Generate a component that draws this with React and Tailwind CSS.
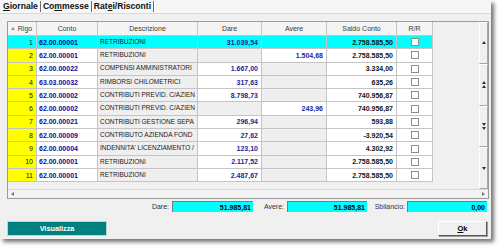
import React from "react";

const rows = [
  { n: 1, conto: "62.00.00001", desc: "RETRIBUZIONI", dare: "31.039,54", avere: "", saldo: "2.758.585,50" },
  { n: 2, conto: "62.00.00001", desc: "RETRIBUZIONI", dare: "", avere: "1.504,68", saldo: "2.758.585,50" },
  { n: 3, conto: "62.00.00022", desc: "COMPENSI AMMINISTRATORI", dare: "1.667,00", avere: "", saldo: "3.334,00" },
  { n: 4, conto: "63.03.00032", desc: "RIMBORSI CHILOMETRICI", dare: "317,63", avere: "", saldo: "635,26" },
  { n: 5, conto: "62.00.00002", desc: "CONTRIBUTI PREVID. C/AZIEN", dare: "8.798,73", avere: "", saldo: "740.956,87" },
  { n: 6, conto: "62.00.00002", desc: "CONTRIBUTI PREVID. C/AZIEN", dare: "", avere: "243,96", saldo: "740.956,87" },
  { n: 7, conto: "62.00.00021", desc: "CONTRIBUTI GESTIONE SEPA", dare: "296,94", avere: "", saldo: "593,88" },
  { n: 8, conto: "62.00.00009", desc: "CONTRIBUTO AZIENDA FOND", dare: "27,62", avere: "", saldo: "-3.920,54" },
  { n: 9, conto: "62.00.00004", desc: "INDENNITA' LICENZIAMENTO /", dare: "123,10", avere: "", saldo: "4.302,92" },
  { n: 10, conto: "62.00.00001", desc: "RETRIBUZIONI", dare: "2.117,52", avere: "", saldo: "2.758.585,50" },
  { n: 11, conto: "62.00.00001", desc: "RETRIBUZIONI", dare: "2.487,67", avere: "", saldo: "2.758.585,50" },
];

const cell = "h-full flex items-center border-r border-b border-[#c4c4c4] overflow-hidden whitespace-nowrap";

function Check() {
  return <div className="w-[8px] h-[8px] border border-[#8e8e8e] bg-white" />;
}

function Tri({ up = true, cls = "" }) {
  return (
    <svg width="4" height="3" viewBox="0 0 4 3" className={cls}>
      {up ? <polygon points="2,0 4,3 0,3" fill="#303030" /> : <polygon points="0,0 4,0 2,3" fill="#303030" />}
    </svg>
  );
}

function Row({ r }) {
  const sel = r.n === 1;
  const cy = "bg-[#00ffff]";
  return (
    <div className="flex h-[13.3px] text-[7px] leading-none">
      <div className={`${cell} w-[29px] justify-end pr-[3px] text-[#111] ${sel ? cy : "bg-[#ffff00]"}`}>{r.n}</div>
      <div className={`${cell} w-[61px] pl-[2px] font-bold text-[#0a0a9a] ${sel ? cy : "bg-white"}`}>{r.conto}</div>
      <div className={`${cell} w-[100px] pl-[2px] text-[6.5px] text-[#1a1a1a] ${sel ? cy : "bg-[#efefef]"}`}>{r.desc}</div>
      <div className={`${cell} w-[64px] justify-end pr-[3px] font-bold text-[#1e1e9e] ${sel ? cy : r.dare ? "bg-white" : "bg-[#efefef]"}`}>{r.dare}</div>
      <div className={`${cell} w-[65px] justify-end pr-[3px] font-bold text-[#1e1e9e] ${sel ? cy : r.avere ? "bg-white" : "bg-[#efefef]"}`}>{r.avere}</div>
      <div className={`${cell} w-[70px] justify-end pr-[3px] font-bold text-[#141414] ${sel ? cy : "bg-white"}`}>{r.saldo}</div>
      <div className={`${cell} w-[36px] justify-center ${sel ? cy : "bg-white"}`}><Check /></div>
    </div>
  );
}

function Head({ w, children }) {
  return (
    <div className={`h-full flex items-center justify-center border-r border-b border-[#c4c4c4] bg-[#f4f4f4] text-[#3a3a3a] ${w}`}>{children}</div>
  );
}

function VSeg({ children }) {
  return (
    <div className="flex-1 flex flex-col items-center justify-center gap-[1px] bg-[#f0f0f0] border-l border-t border-l-white border-t-white border-r border-b border-r-[#a6a6a6] border-b-[#a6a6a6]">
      {children}
    </div>
  );
}

function Sep() {
  return <div className="w-px h-[11px] bg-[#6e6e6e] mx-[2px] shadow-[1px_0_0_#ffffff]" />;
}

export default function App() {
  return (
    <div className="w-[501px] h-[248px] bg-white" style={{ fontFamily: '"Liberation Sans", Arial, sans-serif' }}>
      <div className="w-[491px] h-[239px] bg-[#f0f0f0] shadow-[3px_3px_4px_rgba(0,0,0,0.55)] flex flex-col">
        {/* tabs */}
        <div className="h-[14px] flex items-center pl-[3px] bg-[#f6f6f6] border-b border-[#dadada] text-[8.6px] font-bold text-[#111] leading-none whitespace-nowrap">
          <div><span className="underline">G</span>iornale</div>
          <Sep />
          <div>Co<span className="underline">m</span>messe</div>
          <Sep />
          <div>Rat<span className="underline">e</span>i/Risconti</div>
          <Sep />
        </div>

        {/* grid */}
        <div className="ml-[7px] mt-[7px] w-[482px] h-[178px] border border-[#9c9c9c] flex flex-col">
          <div className="flex h-[167px]">
            <div className="w-[471px] h-full bg-[#f0f0f0] flex flex-col">
              <div className="flex h-[14px] text-[7px] leading-none">
                <Head w="w-[29px] relative">
                  <Tri cls="absolute left-[3px] top-[5px] opacity-50" />
                  <span className="ml-[6px]">Rigo</span>
                </Head>
                <Head w="w-[61px]">Conto</Head>
                <Head w="w-[100px]">Descrizione</Head>
                <Head w="w-[64px]">Dare</Head>
                <Head w="w-[65px]">Avere</Head>
                <Head w="w-[70px]">Saldo Conto</Head>
                <Head w="w-[36px]">R/R</Head>
              </div>
              {rows.map((r) => (
                <Row key={r.n} r={r} />
              ))}
            </div>
            <div className="w-[9px] h-full flex flex-col">
              <VSeg><Tri /></VSeg>
              <VSeg><Tri /><Tri /></VSeg>
              <VSeg><Tri up={false} /><Tri up={false} /></VSeg>
              <VSeg><Tri up={false} /></VSeg>
            </div>
          </div>
          <div className="flex-1 bg-[#f3f3f3] border-t border-[#d8d8d8] flex items-center justify-between px-[3px]">
            <svg width="3" height="4" viewBox="0 0 3 4"><polygon points="3,0 3,4 0,2" fill="#7a7a7a" /></svg>
            <svg width="3" height="4" viewBox="0 0 3 4"><polygon points="0,0 0,4 3,2" fill="#7a7a7a" /></svg>
          </div>
        </div>

        {/* totals */}
        <div className="flex items-center h-[11px] mt-[2px] ml-[148px] text-[7px] leading-none">
          <div className="w-[21px] text-right text-[#333] mr-[3px]">Dare:</div>
          <div className="w-[81px] h-full bg-[#00ffff] border-l border-t border-[#7a7a7a] flex items-center justify-end pr-[2px] font-bold text-black">51.985,81</div>
          <div className="w-[31px] text-right text-[#333] mr-[3px]">Avere:</div>
          <div className="w-[80px] h-full bg-[#00ffff] border-l border-t border-[#7a7a7a] flex items-center justify-end pr-[2px] font-bold text-black">51.985,81</div>
          <div className="w-[38px] text-right text-[#333] mr-[2px]">Sbilancio:</div>
          <div className="w-[80px] h-full bg-[#00ffff] border-l border-t border-[#7a7a7a] flex items-center justify-end pr-[2px] font-bold text-black">0,00</div>
        </div>

        {/* buttons */}
        <div className="flex items-center justify-between mt-[9px] pl-[7px] pr-[4px] h-[15px]">
          <div className="w-[100px] h-full bg-[#008080] border border-[#bcd6d6] flex items-center justify-center text-white font-bold text-[7.3px] leading-none">Visualizza</div>
          <div className="w-[49px] h-full bg-[#f0f0f0] border border-t-white border-l-white border-r-[#555] border-b-[#555] shadow-[1px_1px_0_#a0a0a0] flex items-center justify-center font-bold text-[7.5px] text-black leading-none">
            <span className="underline">O</span>k
          </div>
        </div>
      </div>
    </div>
  );
}
